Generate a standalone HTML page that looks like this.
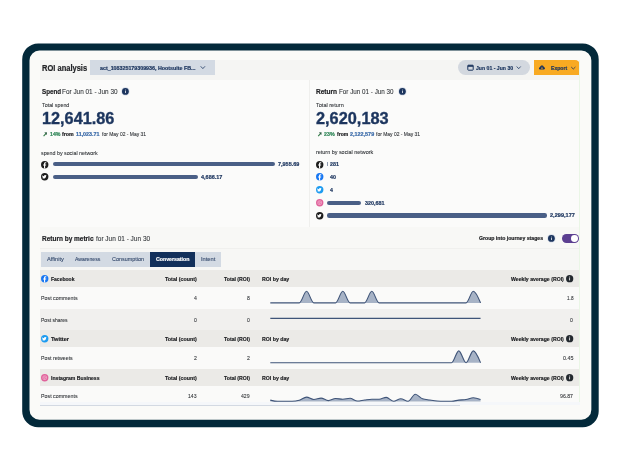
<!DOCTYPE html>
<html><head><meta charset="utf-8"><style>
html,body{margin:0;padding:0;}
body{width:620px;height:465px;overflow:hidden;background:#fff;position:relative;font-family:"Liberation Sans",sans-serif;}
#w{position:absolute;left:0;top:0;width:620px;height:465px;filter:blur(0.45px);}
.t{position:absolute;white-space:nowrap;line-height:1;transform-origin:0 0;}
.b{-webkit-text-stroke:0.2px currentColor;}
.r{-webkit-text-stroke:0.1px currentColor;}
</style></head><body><div id="w">
<svg style="overflow:visible;position:absolute;left:0;top:0" width="620" height="465" viewBox="0 0 620 465"><path d="M38.2,43.4 H582.7 A16,16 0 0 1 598.7,59.4 V411.3 A16,16 0 0 1 582.7,427.3 H38.2 A16,16 0 0 1 22.2,411.3 V59.4 A16,16 0 0 1 38.2,43.4 Z" fill="#03293a"/><path d="M39.5,50.6 H581.35 A10,10 0 0 1 591.35,60.6 V409.8 A10,10 0 0 1 581.35,419.8 H39.5 A10,10 0 0 1 29.5,409.8 V60.6 A10,10 0 0 1 39.5,50.6 Z" fill="#fafaf8"/></svg>
<div style="position:absolute;left:40px;top:60px;width:540.00px;height:19.80px;background:#f5f5f3;"></div>
<div class="t b" style="left:41.60px;top:64px;font-size:8.841px;font-weight:700;color:#222326;transform:scaleX(0.8514);">ROI analysis</div>
<div style="position:absolute;left:90px;top:60px;width:125.00px;height:15.00px;background:#d3dae3;"></div>
<div class="t b" style="left:100.30px;top:66px;font-size:5.217px;font-weight:700;color:#1c355e;transform:scaleX(1.0217);">act_108325179309936, Hootsuite FB...</div>
<svg style="overflow:visible;position:absolute;left:0;top:0" width="620" height="465"><path d="M200.7 66.3 L202.85 68.6 L205.0 66.3" fill="none" stroke="#1c355e" stroke-width="0.8"/></svg>
<div style="position:absolute;left:457.5px;top:60.3px;width:72.50px;height:14.90px;background:#d3d8df;border-radius:8px"></div>
<svg style="overflow:visible;position:absolute;left:466.6px;top:63.9px" width="7" height="7" viewBox="0 0 7 7"><rect x="0.8" y="1.2" width="5.4" height="5" rx="0.6" fill="none" stroke="#1c355e" stroke-width="1"/><rect x="0.8" y="1.2" width="5.4" height="1.6" fill="#1c355e"/></svg>
<div class="t b" style="left:476.00px;top:66px;font-size:5.507px;font-weight:700;color:#1c355e;transform:scaleX(0.9350);">Jun 01 - Jun 30</div>
<svg style="overflow:visible;position:absolute;left:0;top:0" width="620" height="465"><path d="M516.7 66.5 L518.7 68.7 L520.7 66.5" fill="none" stroke="#1c355e" stroke-width="0.8"/></svg>
<div style="position:absolute;left:533.5px;top:60px;width:46.50px;height:15.00px;background:#f8aa22;border-top-right-radius:5px"></div>
<svg style="overflow:visible;position:absolute;left:538.3px;top:63.6px" width="8" height="7" viewBox="0 0 8 7"><path d="M2 5.5 C0.5 5.5 0.5 3.2 2 3.2 C2.2 1.2 5.3 1 5.8 3 C7.4 3 7.4 5.5 6 5.5 Z" fill="#1c355e"/><path d="M4 2.8 V4.8 M3.2 4 L4 4.8 L4.8 4" stroke="#f6a623" stroke-width="0.6" fill="none"/></svg>
<div class="t b" style="left:550.50px;top:66px;font-size:5.362px;font-weight:700;color:#1c355e;transform:scaleX(0.9487);">Export</div>
<svg style="overflow:visible;position:absolute;left:0;top:0" width="620" height="465"><path d="M571.2 67.0 L573.3000000000001 69.0 L575.4000000000001 67.0" fill="none" stroke="#1c355e" stroke-width="0.8"/></svg>
<div style="position:absolute;left:40px;top:79.8px;width:540.00px;height:147.40px;background:#fbfbfa;"></div>
<div style="position:absolute;left:309px;top:79.8px;width:1.00px;height:147.40px;background:#efefed;"></div>
<div style="position:absolute;left:40px;top:226.7px;width:540.00px;height:0.70px;background:#efefed;"></div>
<div class="t b" style="left:41.50px;top:88px;font-size:7.246px;font-weight:700;color:#222326;transform:scaleX(0.8628);">Spend</div>
<div class="t r" style="left:62.20px;top:88px;font-size:7.246px;font-weight:400;color:#33363a;transform:scaleX(0.8850);">For Jun 01 - Jun 30</div>
<svg style="overflow:visible;position:absolute;left:121.90px;top:87.90px" width="6.8" height="6.8" viewBox="0 0 10 10"><circle cx="5" cy="5" r="6.3" fill="#dfe4ec"/><circle cx="5" cy="5" r="5" fill="#1c355e"/><circle cx="5" cy="2.8" r="0.7" fill="#fff"/><rect x="4.45" y="4.2" width="1.1" height="3.2" fill="#fff"/></svg>
<div class="t r" style="left:41.60px;top:103px;font-size:5.797px;font-weight:400;color:#33363a;transform:scaleX(0.9241);">Total spend</div>
<div class="t b" style="left:41.80px;top:111px;font-size:15.942px;font-weight:700;color:#1c355e;transform:scaleX(1.0206);-webkit-text-stroke:0.35px #1c355e">12,641.86</div>
<svg style="overflow:visible;position:absolute;left:0;top:0" width="620" height="465"><path d="M43.6 136.1 L45.9 133.7" stroke="#2f7a45" stroke-width="1.1"/><path d="M44.3 132.4 L46.9 132.3 L46.8 134.9 Z" fill="#24553a"/></svg>
<div class="t b" style="left:50.10px;top:132px;font-size:5.072px;font-weight:700;color:#33885a;transform:scaleX(1.0351);">14%</div>
<div class="t b" style="left:62.20px;top:132px;font-size:5.072px;font-weight:700;color:#222326;transform:scaleX(1.0302);">from</div>
<div class="t b" style="left:76.10px;top:132px;font-size:5.072px;font-weight:700;color:#3a6aa8;transform:scaleX(1.0542);">11,023.71</div>
<div class="t r" style="left:101.70px;top:132px;font-size:5.072px;font-weight:400;color:#33363a;transform:scaleX(0.9780);">for May 02 - May 31</div>
<div class="t r" style="left:41.30px;top:151px;font-size:5.652px;font-weight:400;color:#33363a;transform:scaleX(0.9410);">spend by social network</div>
<svg style="overflow:visible;position:absolute;left:41.20px;top:160.50px" width="7.4" height="7.4" viewBox="0 0 10 10"><circle cx="5" cy="5" r="5" fill="#1d1d1d"/><path d="M5.6 10 V6.2 H6.9 L7.1 4.7 H5.6 V3.8 C5.6 3.4 5.8 3.1 6.3 3.1 H7.1 V1.8 C6.8 1.75 6.4 1.7 6 1.7 C4.8 1.7 4.1 2.4 4.1 3.7 V4.7 H2.9 V6.2 H4.1 V10 Z" fill="#fff"/></svg>
<div style="position:absolute;left:52.6px;top:162.00px;width:222.60px;height:4.4px;border-radius:2.2px;background:#4a5f86"></div>
<div class="t b" style="left:278.00px;top:162px;font-size:5.362px;font-weight:700;color:#1c355e;transform:scaleX(1.0199);">7,955.69</div>
<svg style="overflow:visible;position:absolute;left:41.20px;top:173.30px" width="7.4" height="7.4" viewBox="0 0 10 10"><circle cx="5" cy="5" r="5" fill="#1d1d1d"/><path d="M7.6 3.3 C7.3 3.45 7 3.5 6.7 3.55 C7 3.35 7.25 3.05 7.35 2.7 C7.05 2.9 6.7 3 6.4 3.1 C5.8 2.5 4.8 2.6 4.4 3.3 C4.2 3.6 4.15 3.95 4.25 4.3 C3.2 4.25 2.3 3.8 1.7 3 C1.4 3.5 1.55 4.2 2.05 4.55 C1.85 4.55 1.7 4.5 1.55 4.4 C1.55 4.95 1.95 5.4 2.45 5.55 C2.3 5.6 2.1 5.6 1.95 5.6 C2.1 6.05 2.55 6.35 3.05 6.4 C2.6 6.75 2 6.95 1.4 6.9 C3.8 8.4 6.9 6.9 6.95 4 C7.2 3.8 7.45 3.6 7.6 3.3 Z" fill="#fff"/></svg>
<div style="position:absolute;left:52.6px;top:174.80px;width:145.10px;height:4.4px;border-radius:2.2px;background:#4a5f86"></div>
<div class="t b" style="left:200.60px;top:175px;font-size:5.362px;font-weight:700;color:#1c355e;transform:scaleX(1.0247);">4,686.17</div>
<div class="t b" style="left:315.90px;top:88px;font-size:7.246px;font-weight:700;color:#222326;transform:scaleX(0.9043);">Return</div>
<div class="t r" style="left:339.10px;top:88px;font-size:7.246px;font-weight:400;color:#33363a;transform:scaleX(0.8691);">For Jun 01 - Jun 30</div>
<svg style="overflow:visible;position:absolute;left:399.00px;top:87.90px" width="6.8" height="6.8" viewBox="0 0 10 10"><circle cx="5" cy="5" r="6.3" fill="#dfe4ec"/><circle cx="5" cy="5" r="5" fill="#1c355e"/><circle cx="5" cy="2.8" r="0.7" fill="#fff"/><rect x="4.45" y="4.2" width="1.1" height="3.2" fill="#fff"/></svg>
<div class="t r" style="left:316.00px;top:103px;font-size:5.797px;font-weight:400;color:#33363a;transform:scaleX(0.9582);">Total return</div>
<div class="t b" style="left:316.20px;top:111px;font-size:15.942px;font-weight:700;color:#1c355e;transform:scaleX(1.0248);-webkit-text-stroke:0.35px #1c355e">2,620,183</div>
<svg style="overflow:visible;position:absolute;left:0;top:0" width="620" height="465"><path d="M318.2 136.1 L320.5 133.7" stroke="#2f7a45" stroke-width="1.1"/><path d="M318.9 132.4 L321.5 132.3 L321.4 134.9 Z" fill="#24553a"/></svg>
<div class="t b" style="left:324.10px;top:132px;font-size:5.072px;font-weight:700;color:#33885a;transform:scaleX(1.0450);">23%</div>
<div class="t b" style="left:336.70px;top:132px;font-size:5.072px;font-weight:700;color:#222326;transform:scaleX(0.9947);">from</div>
<div class="t b" style="left:350.20px;top:132px;font-size:5.072px;font-weight:700;color:#3a6aa8;transform:scaleX(1.0722);">2,122,579</div>
<div class="t r" style="left:376.40px;top:132px;font-size:5.072px;font-weight:400;color:#33363a;transform:scaleX(0.9780);">for May 02 - May 31</div>
<div class="t r" style="left:315.60px;top:150px;font-size:5.652px;font-weight:400;color:#33363a;transform:scaleX(0.9613);">return by social network</div>
<svg style="overflow:visible;position:absolute;left:315.50px;top:160.60px" width="7.4" height="7.4" viewBox="0 0 10 10"><circle cx="5" cy="5" r="5" fill="#1d1d1d"/><path d="M5.6 10 V6.2 H6.9 L7.1 4.7 H5.6 V3.8 C5.6 3.4 5.8 3.1 6.3 3.1 H7.1 V1.8 C6.8 1.75 6.4 1.7 6 1.7 C4.8 1.7 4.1 2.4 4.1 3.7 V4.7 H2.9 V6.2 H4.1 V10 Z" fill="#fff"/></svg>
<div style="position:absolute;left:326.9px;top:162.3px;width:0.80px;height:4.20px;background:#8e9bb0;"></div>
<div class="t b" style="left:330.00px;top:162px;font-size:5.362px;font-weight:700;color:#1c355e;transform:scaleX(0.9939);">281</div>
<svg style="overflow:visible;position:absolute;left:315.50px;top:173.40px" width="7.4" height="7.4" viewBox="0 0 10 10"><circle cx="5" cy="5" r="5" fill="#1877f2"/><path d="M5.6 10 V6.2 H6.9 L7.1 4.7 H5.6 V3.8 C5.6 3.4 5.8 3.1 6.3 3.1 H7.1 V1.8 C6.8 1.75 6.4 1.7 6 1.7 C4.8 1.7 4.1 2.4 4.1 3.7 V4.7 H2.9 V6.2 H4.1 V10 Z" fill="#fff"/></svg>
<div class="t b" style="left:330.00px;top:175px;font-size:5.362px;font-weight:700;color:#1c355e;transform:scaleX(0.9913);">40</div>
<svg style="overflow:visible;position:absolute;left:315.50px;top:186.20px" width="7.4" height="7.4" viewBox="0 0 10 10"><circle cx="5" cy="5" r="5" fill="#1d9bf0"/><path d="M7.6 3.3 C7.3 3.45 7 3.5 6.7 3.55 C7 3.35 7.25 3.05 7.35 2.7 C7.05 2.9 6.7 3 6.4 3.1 C5.8 2.5 4.8 2.6 4.4 3.3 C4.2 3.6 4.15 3.95 4.25 4.3 C3.2 4.25 2.3 3.8 1.7 3 C1.4 3.5 1.55 4.2 2.05 4.55 C1.85 4.55 1.7 4.5 1.55 4.4 C1.55 4.95 1.95 5.4 2.45 5.55 C2.3 5.6 2.1 5.6 1.95 5.6 C2.1 6.05 2.55 6.35 3.05 6.4 C2.6 6.75 2 6.95 1.4 6.9 C3.8 8.4 6.9 6.9 6.95 4 C7.2 3.8 7.45 3.6 7.6 3.3 Z" fill="#fff"/></svg>
<div class="t b" style="left:330.00px;top:188px;font-size:5.362px;font-weight:700;color:#1c355e;transform:scaleX(0.9745);">4</div>
<svg style="overflow:visible;position:absolute;left:315.50px;top:199.20px" width="7.4" height="7.4" viewBox="0 0 10 10"><circle cx="5" cy="5" r="5" fill="#e0629b"/><rect x="2.6" y="2.6" width="4.8" height="4.8" rx="1.4" fill="none" stroke="#f7c6dc" stroke-width="0.8"/><circle cx="5" cy="5" r="1.1" fill="none" stroke="#f7c6dc" stroke-width="0.7"/></svg>
<div style="position:absolute;left:327.3px;top:200.70px;width:34.20px;height:4.4px;border-radius:2.2px;background:#4a5f86"></div>
<div class="t b" style="left:364.50px;top:201px;font-size:5.362px;font-weight:700;color:#1c355e;transform:scaleX(1.0060);">320,681</div>
<svg style="overflow:visible;position:absolute;left:315.50px;top:211.80px" width="7.4" height="7.4" viewBox="0 0 10 10"><circle cx="5" cy="5" r="5" fill="#1d1d1d"/><path d="M7.6 3.3 C7.3 3.45 7 3.5 6.7 3.55 C7 3.35 7.25 3.05 7.35 2.7 C7.05 2.9 6.7 3 6.4 3.1 C5.8 2.5 4.8 2.6 4.4 3.3 C4.2 3.6 4.15 3.95 4.25 4.3 C3.2 4.25 2.3 3.8 1.7 3 C1.4 3.5 1.55 4.2 2.05 4.55 C1.85 4.55 1.7 4.5 1.55 4.4 C1.55 4.95 1.95 5.4 2.45 5.55 C2.3 5.6 2.1 5.6 1.95 5.6 C2.1 6.05 2.55 6.35 3.05 6.4 C2.6 6.75 2 6.95 1.4 6.9 C3.8 8.4 6.9 6.9 6.95 4 C7.2 3.8 7.45 3.6 7.6 3.3 Z" fill="#fff"/></svg>
<div style="position:absolute;left:327.3px;top:213.30px;width:219.80px;height:4.4px;border-radius:2.2px;background:#4a5f86"></div>
<div class="t b" style="left:549.90px;top:213px;font-size:5.362px;font-weight:700;color:#1c355e;transform:scaleX(1.0435);">2,299,177</div>
<div style="position:absolute;left:40px;top:227.4px;width:540.00px;height:20.80px;background:#f8f8f6;"></div>
<div style="position:absolute;left:40px;top:248.2px;width:540.00px;height:0.70px;background:#f0f0ee;"></div>
<div class="t b" style="left:41.90px;top:235px;font-size:7.246px;font-weight:700;color:#222326;transform:scaleX(0.8963);">Return by metric</div>
<div class="t r" style="left:95.50px;top:235px;font-size:7.246px;font-weight:400;color:#33363a;transform:scaleX(0.8969);">for Jun 01 - Jun 30</div>
<div class="t b" style="left:479.10px;top:236px;font-size:5.507px;font-weight:700;color:#222326;transform:scaleX(0.9353);">Group into journey stages</div>
<svg style="overflow:visible;position:absolute;left:547.90px;top:235.20px" width="6.8" height="6.8" viewBox="0 0 10 10"><circle cx="5" cy="5" r="6.3" fill="#dfe4ec"/><circle cx="5" cy="5" r="5" fill="#1c355e"/><circle cx="5" cy="2.8" r="0.7" fill="#fff"/><rect x="4.45" y="4.2" width="1.1" height="3.2" fill="#fff"/></svg>
<div style="position:absolute;left:561.5px;top:234.1px;width:17.5px;height:8.8px;border-radius:4.4px;background:#5c3f91"></div>
<div style="position:absolute;left:571px;top:235.1px;width:6.8px;height:6.8px;border-radius:50%;background:#fff"></div>
<div style="position:absolute;left:40px;top:248.9px;width:540.00px;height:156.10px;background:#f7f7f5;"></div>
<div style="position:absolute;left:41px;top:251.9px;width:179.50px;height:14.80px;background:#d3dae3;"></div>
<div style="position:absolute;left:149.9px;top:251.9px;width:44.90px;height:14.80px;background:#12305b;"></div>
<div class="t r" style="left:47.00px;top:257px;font-size:5.507px;font-weight:400;color:#33486b;transform:scaleX(1.0281);">Affinity</div>
<div class="t r" style="left:75.20px;top:257px;font-size:5.507px;font-weight:400;color:#33486b;transform:scaleX(0.9319);">Awareness</div>
<div class="t r" style="left:112.00px;top:257px;font-size:5.507px;font-weight:400;color:#33486b;transform:scaleX(0.9866);">Consumption</div>
<div class="t b" style="left:155.60px;top:257px;font-size:5.507px;font-weight:700;color:#ffffff;transform:scaleX(0.9520);">Conversation</div>
<div class="t r" style="left:200.60px;top:257px;font-size:5.507px;font-weight:400;color:#33486b;transform:scaleX(1.0387);">Intent</div>
<div style="position:absolute;left:40px;top:270px;width:540.00px;height:17.00px;background:#ebeae7;"></div>
<svg style="overflow:visible;position:absolute;left:41.20px;top:274.80px" width="7.4" height="7.4" viewBox="0 0 10 10"><circle cx="5" cy="5" r="5" fill="#1877f2"/><path d="M5.6 10 V6.2 H6.9 L7.1 4.7 H5.6 V3.8 C5.6 3.4 5.8 3.1 6.3 3.1 H7.1 V1.8 C6.8 1.75 6.4 1.7 6 1.7 C4.8 1.7 4.1 2.4 4.1 3.7 V4.7 H2.9 V6.2 H4.1 V10 Z" fill="#fff"/></svg>
<div class="t b" style="left:51.20px;top:276px;font-size:6.087px;font-weight:700;color:#222326;transform:scaleX(0.8267);">Facebook</div>
<div class="t b" style="left:165.10px;top:276px;font-size:6.087px;font-weight:700;color:#222326;transform:scaleX(0.8764);">Total (count)</div>
<div class="t b" style="left:224.00px;top:276px;font-size:6.087px;font-weight:700;color:#222326;transform:scaleX(0.8483);">Total (ROI)</div>
<div class="t b" style="left:261.70px;top:276px;font-size:6.087px;font-weight:700;color:#222326;transform:scaleX(0.8584);">ROI by day</div>
<div class="t b" style="left:511.30px;top:276px;font-size:6.087px;font-weight:700;color:#222326;transform:scaleX(0.8512);">Weekly average (ROI)</div>
<svg style="overflow:visible;position:absolute;left:566.05px;top:274.85px" width="7.3" height="7.3" viewBox="0 0 10 10"><circle cx="5" cy="5" r="5" fill="#22282e"/><circle cx="5" cy="2.8" r="0.7" fill="#fff"/><rect x="4.45" y="4.2" width="1.1" height="3.2" fill="#fff"/></svg>
<div style="position:absolute;left:40px;top:287px;width:540.00px;height:21.50px;background:#fafaf9;"></div>
<div class="t r" style="left:41.30px;top:295px;font-size:6.087px;font-weight:400;color:#33363a;transform:scaleX(0.8727);">Post comments</div>
<div class="t r" style="left:194.13px;top:295px;font-size:6.087px;font-weight:400;color:#33363a;transform:scaleX(0.8500);">4</div>
<div class="t r" style="left:247.13px;top:295px;font-size:6.087px;font-weight:400;color:#33363a;transform:scaleX(0.8500);">8</div>
<div class="t r" style="left:566.50px;top:295px;font-size:6.087px;font-weight:400;color:#33363a;transform:scaleX(0.7682);">1.8</div>
<div style="position:absolute;left:40px;top:308.5px;width:540.00px;height:21.50px;background:#f1f0ee;"></div>
<div class="t r" style="left:41.30px;top:317px;font-size:6.087px;font-weight:400;color:#33363a;transform:scaleX(0.8245);">Post shares</div>
<div class="t r" style="left:194.13px;top:317px;font-size:6.087px;font-weight:400;color:#33363a;transform:scaleX(0.8500);">0</div>
<div class="t r" style="left:247.13px;top:317px;font-size:6.087px;font-weight:400;color:#33363a;transform:scaleX(0.8500);">0</div>
<div class="t r" style="left:570.10px;top:317px;font-size:6.087px;font-weight:400;color:#33363a;transform:scaleX(0.8584);">0</div>
<div style="position:absolute;left:40px;top:330px;width:540.00px;height:17.00px;background:#ebeae7;"></div>
<svg style="overflow:visible;position:absolute;left:41.20px;top:334.80px" width="7.4" height="7.4" viewBox="0 0 10 10"><circle cx="5" cy="5" r="5" fill="#1d9bf0"/><path d="M7.6 3.3 C7.3 3.45 7 3.5 6.7 3.55 C7 3.35 7.25 3.05 7.35 2.7 C7.05 2.9 6.7 3 6.4 3.1 C5.8 2.5 4.8 2.6 4.4 3.3 C4.2 3.6 4.15 3.95 4.25 4.3 C3.2 4.25 2.3 3.8 1.7 3 C1.4 3.5 1.55 4.2 2.05 4.55 C1.85 4.55 1.7 4.5 1.55 4.4 C1.55 4.95 1.95 5.4 2.45 5.55 C2.3 5.6 2.1 5.6 1.95 5.6 C2.1 6.05 2.55 6.35 3.05 6.4 C2.6 6.75 2 6.95 1.4 6.9 C3.8 8.4 6.9 6.9 6.95 4 C7.2 3.8 7.45 3.6 7.6 3.3 Z" fill="#fff"/></svg>
<div class="t b" style="left:51.20px;top:336px;font-size:6.087px;font-weight:700;color:#222326;transform:scaleX(0.9278);">Twitter</div>
<div class="t b" style="left:165.10px;top:336px;font-size:6.087px;font-weight:700;color:#222326;transform:scaleX(0.8764);">Total (count)</div>
<div class="t b" style="left:224.00px;top:336px;font-size:6.087px;font-weight:700;color:#222326;transform:scaleX(0.8483);">Total (ROI)</div>
<div class="t b" style="left:261.70px;top:336px;font-size:6.087px;font-weight:700;color:#222326;transform:scaleX(0.8584);">ROI by day</div>
<div class="t b" style="left:511.30px;top:336px;font-size:6.087px;font-weight:700;color:#222326;transform:scaleX(0.8512);">Weekly average (ROI)</div>
<svg style="overflow:visible;position:absolute;left:566.05px;top:334.85px" width="7.3" height="7.3" viewBox="0 0 10 10"><circle cx="5" cy="5" r="5" fill="#22282e"/><circle cx="5" cy="2.8" r="0.7" fill="#fff"/><rect x="4.45" y="4.2" width="1.1" height="3.2" fill="#fff"/></svg>
<div style="position:absolute;left:40px;top:347px;width:540.00px;height:22.00px;background:#fafaf9;"></div>
<div class="t r" style="left:41.30px;top:355px;font-size:6.087px;font-weight:400;color:#33363a;transform:scaleX(0.8621);">Post retweets</div>
<div class="t r" style="left:194.13px;top:355px;font-size:6.087px;font-weight:400;color:#33363a;transform:scaleX(0.8500);">2</div>
<div class="t r" style="left:247.13px;top:355px;font-size:6.087px;font-weight:400;color:#33363a;transform:scaleX(0.8500);">2</div>
<div class="t r" style="left:562.50px;top:355px;font-size:6.087px;font-weight:400;color:#33363a;transform:scaleX(0.8869);">0.45</div>
<div style="position:absolute;left:40px;top:369px;width:540.00px;height:16.80px;background:#ebeae7;"></div>
<svg style="overflow:visible;position:absolute;left:41.20px;top:373.70px" width="7.4" height="7.4" viewBox="0 0 10 10"><circle cx="5" cy="5" r="5" fill="#e0629b"/><rect x="2.6" y="2.6" width="4.8" height="4.8" rx="1.4" fill="none" stroke="#f7c6dc" stroke-width="0.8"/><circle cx="5" cy="5" r="1.1" fill="none" stroke="#f7c6dc" stroke-width="0.7"/></svg>
<div class="t b" style="left:51.20px;top:375px;font-size:6.087px;font-weight:700;color:#222326;transform:scaleX(0.8400);">Instagram Business</div>
<div class="t b" style="left:165.10px;top:375px;font-size:6.087px;font-weight:700;color:#222326;transform:scaleX(0.8764);">Total (count)</div>
<div class="t b" style="left:224.00px;top:375px;font-size:6.087px;font-weight:700;color:#222326;transform:scaleX(0.8483);">Total (ROI)</div>
<div class="t b" style="left:261.70px;top:375px;font-size:6.087px;font-weight:700;color:#222326;transform:scaleX(0.8584);">ROI by day</div>
<div class="t b" style="left:511.30px;top:375px;font-size:6.087px;font-weight:700;color:#222326;transform:scaleX(0.8512);">Weekly average (ROI)</div>
<svg style="overflow:visible;position:absolute;left:566.05px;top:373.75px" width="7.3" height="7.3" viewBox="0 0 10 10"><circle cx="5" cy="5" r="5" fill="#22282e"/><circle cx="5" cy="2.8" r="0.7" fill="#fff"/><rect x="4.45" y="4.2" width="1.1" height="3.2" fill="#fff"/></svg>
<div style="position:absolute;left:40px;top:385.8px;width:540.00px;height:19.20px;background:#fafaf9;"></div>
<div class="t r" style="left:41.30px;top:393px;font-size:6.087px;font-weight:400;color:#33363a;transform:scaleX(0.8727);">Post comments</div>
<div class="t r" style="left:188.36px;top:393px;font-size:6.087px;font-weight:400;color:#33363a;transform:scaleX(0.8500);">143</div>
<div class="t r" style="left:241.36px;top:393px;font-size:6.087px;font-weight:400;color:#33363a;transform:scaleX(0.8500);">429</div>
<div class="t r" style="left:560.00px;top:393px;font-size:6.087px;font-weight:400;color:#33363a;transform:scaleX(0.8526);">96.87</div>
<div style="position:absolute;left:40px;top:404.8px;width:420.00px;height:1.00px;background:#d3d9e2;"></div>
<svg style="overflow:visible;position:absolute;left:0;top:0" width="620" height="465" viewBox="0 0 620 465"><path d="M270.30,302.90 C272.72,302.90 275.13,302.90 277.55,302.90 C279.97,302.90 282.38,302.90 284.80,302.90 C287.22,302.90 289.63,302.90 292.05,302.90 C294.47,302.90 296.88,302.90 299.30,302.90 C301.72,302.90 304.13,291.30 306.55,291.30 C308.97,291.30 311.38,302.90 313.80,302.90 C316.22,302.90 318.63,302.90 321.05,302.90 C323.47,302.90 325.88,302.90 328.30,302.90 C330.72,302.90 333.13,302.90 335.55,302.90 C337.97,302.90 340.38,291.30 342.80,291.30 C345.22,291.30 347.63,302.90 350.05,302.90 C352.47,302.90 354.88,302.90 357.30,302.90 C359.72,302.90 362.13,302.90 364.55,302.90 C366.97,302.90 369.38,291.30 371.80,291.30 C374.22,291.30 376.63,302.90 379.05,302.90 C381.47,302.90 383.88,302.90 386.30,302.90 C388.72,302.90 391.13,302.90 393.55,302.90 C395.97,302.90 398.38,302.90 400.80,302.90 C403.22,302.90 405.63,302.90 408.05,302.90 C410.47,302.90 412.88,302.90 415.30,302.90 C417.72,302.90 420.13,302.90 422.55,302.90 C424.97,302.90 427.38,302.90 429.80,302.90 C432.22,302.90 434.63,302.90 437.05,302.90 C439.47,302.90 441.88,302.90 444.30,302.90 C446.72,302.90 449.13,302.90 451.55,302.90 C453.97,302.90 456.38,302.90 458.80,302.90 C461.22,302.90 463.63,302.90 466.05,302.90 C468.47,302.90 470.88,291.30 473.30,291.30 C475.72,291.30 478.13,297.10 480.55,302.90 L480.55,302.90 L270.30,302.90 Z" fill="#a7b3c6"/><path d="M270.30,302.90 C272.72,302.90 275.13,302.90 277.55,302.90 C279.97,302.90 282.38,302.90 284.80,302.90 C287.22,302.90 289.63,302.90 292.05,302.90 C294.47,302.90 296.88,302.90 299.30,302.90 C301.72,302.90 304.13,291.30 306.55,291.30 C308.97,291.30 311.38,302.90 313.80,302.90 C316.22,302.90 318.63,302.90 321.05,302.90 C323.47,302.90 325.88,302.90 328.30,302.90 C330.72,302.90 333.13,302.90 335.55,302.90 C337.97,302.90 340.38,291.30 342.80,291.30 C345.22,291.30 347.63,302.90 350.05,302.90 C352.47,302.90 354.88,302.90 357.30,302.90 C359.72,302.90 362.13,302.90 364.55,302.90 C366.97,302.90 369.38,291.30 371.80,291.30 C374.22,291.30 376.63,302.90 379.05,302.90 C381.47,302.90 383.88,302.90 386.30,302.90 C388.72,302.90 391.13,302.90 393.55,302.90 C395.97,302.90 398.38,302.90 400.80,302.90 C403.22,302.90 405.63,302.90 408.05,302.90 C410.47,302.90 412.88,302.90 415.30,302.90 C417.72,302.90 420.13,302.90 422.55,302.90 C424.97,302.90 427.38,302.90 429.80,302.90 C432.22,302.90 434.63,302.90 437.05,302.90 C439.47,302.90 441.88,302.90 444.30,302.90 C446.72,302.90 449.13,302.90 451.55,302.90 C453.97,302.90 456.38,302.90 458.80,302.90 C461.22,302.90 463.63,302.90 466.05,302.90 C468.47,302.90 470.88,291.30 473.30,291.30 C475.72,291.30 478.13,297.10 480.55,302.90" fill="none" stroke="#3f5478" stroke-width="1.1" stroke-linejoin="round"/></svg>
<svg style="overflow:visible;position:absolute;left:0;top:0" width="620" height="465" viewBox="0 0 620 465"><path d="M270.30,318.40 C272.72,318.40 275.13,318.40 277.55,318.40 C279.97,318.40 282.38,318.40 284.80,318.40 C287.22,318.40 289.63,318.40 292.05,318.40 C294.47,318.40 296.88,318.40 299.30,318.40 C301.72,318.40 304.13,318.40 306.55,318.40 C308.97,318.40 311.38,318.40 313.80,318.40 C316.22,318.40 318.63,318.40 321.05,318.40 C323.47,318.40 325.88,318.40 328.30,318.40 C330.72,318.40 333.13,318.40 335.55,318.40 C337.97,318.40 340.38,318.40 342.80,318.40 C345.22,318.40 347.63,318.40 350.05,318.40 C352.47,318.40 354.88,318.40 357.30,318.40 C359.72,318.40 362.13,318.40 364.55,318.40 C366.97,318.40 369.38,318.40 371.80,318.40 C374.22,318.40 376.63,318.40 379.05,318.40 C381.47,318.40 383.88,318.40 386.30,318.40 C388.72,318.40 391.13,318.40 393.55,318.40 C395.97,318.40 398.38,318.40 400.80,318.40 C403.22,318.40 405.63,318.40 408.05,318.40 C410.47,318.40 412.88,318.40 415.30,318.40 C417.72,318.40 420.13,318.40 422.55,318.40 C424.97,318.40 427.38,318.40 429.80,318.40 C432.22,318.40 434.63,318.40 437.05,318.40 C439.47,318.40 441.88,318.40 444.30,318.40 C446.72,318.40 449.13,318.40 451.55,318.40 C453.97,318.40 456.38,318.40 458.80,318.40 C461.22,318.40 463.63,318.40 466.05,318.40 C468.47,318.40 470.88,318.40 473.30,318.40 C475.72,318.40 478.13,318.40 480.55,318.40 L480.55,318.40 L270.30,318.40 Z" fill="#a7b3c6"/><path d="M270.30,318.40 C272.72,318.40 275.13,318.40 277.55,318.40 C279.97,318.40 282.38,318.40 284.80,318.40 C287.22,318.40 289.63,318.40 292.05,318.40 C294.47,318.40 296.88,318.40 299.30,318.40 C301.72,318.40 304.13,318.40 306.55,318.40 C308.97,318.40 311.38,318.40 313.80,318.40 C316.22,318.40 318.63,318.40 321.05,318.40 C323.47,318.40 325.88,318.40 328.30,318.40 C330.72,318.40 333.13,318.40 335.55,318.40 C337.97,318.40 340.38,318.40 342.80,318.40 C345.22,318.40 347.63,318.40 350.05,318.40 C352.47,318.40 354.88,318.40 357.30,318.40 C359.72,318.40 362.13,318.40 364.55,318.40 C366.97,318.40 369.38,318.40 371.80,318.40 C374.22,318.40 376.63,318.40 379.05,318.40 C381.47,318.40 383.88,318.40 386.30,318.40 C388.72,318.40 391.13,318.40 393.55,318.40 C395.97,318.40 398.38,318.40 400.80,318.40 C403.22,318.40 405.63,318.40 408.05,318.40 C410.47,318.40 412.88,318.40 415.30,318.40 C417.72,318.40 420.13,318.40 422.55,318.40 C424.97,318.40 427.38,318.40 429.80,318.40 C432.22,318.40 434.63,318.40 437.05,318.40 C439.47,318.40 441.88,318.40 444.30,318.40 C446.72,318.40 449.13,318.40 451.55,318.40 C453.97,318.40 456.38,318.40 458.80,318.40 C461.22,318.40 463.63,318.40 466.05,318.40 C468.47,318.40 470.88,318.40 473.30,318.40 C475.72,318.40 478.13,318.40 480.55,318.40" fill="none" stroke="#3f5478" stroke-width="1.1" stroke-linejoin="round"/></svg>
<svg style="overflow:visible;position:absolute;left:0;top:0" width="620" height="465" viewBox="0 0 620 465"><path d="M270.30,362.70 C272.72,362.70 275.13,362.70 277.55,362.70 C279.97,362.70 282.38,362.70 284.80,362.70 C287.22,362.70 289.63,362.70 292.05,362.70 C294.47,362.70 296.88,362.70 299.30,362.70 C301.72,362.70 304.13,362.70 306.55,362.70 C308.97,362.70 311.38,362.70 313.80,362.70 C316.22,362.70 318.63,362.70 321.05,362.70 C323.47,362.70 325.88,362.70 328.30,362.70 C330.72,362.70 333.13,362.70 335.55,362.70 C337.97,362.70 340.38,362.70 342.80,362.70 C345.22,362.70 347.63,362.70 350.05,362.70 C352.47,362.70 354.88,362.70 357.30,362.70 C359.72,362.70 362.13,362.70 364.55,362.70 C366.97,362.70 369.38,362.70 371.80,362.70 C374.22,362.70 376.63,362.70 379.05,362.70 C381.47,362.70 383.88,362.70 386.30,362.70 C388.72,362.70 391.13,362.70 393.55,362.70 C395.97,362.70 398.38,362.70 400.80,362.70 C403.22,362.70 405.63,362.70 408.05,362.70 C410.47,362.70 412.88,362.70 415.30,362.70 C417.72,362.70 420.13,362.70 422.55,362.70 C424.97,362.70 427.38,362.70 429.80,362.70 C432.22,362.70 434.63,362.70 437.05,362.70 C439.47,362.70 441.88,362.70 444.30,362.70 C446.72,362.70 449.13,362.70 451.55,362.70 C453.97,362.70 456.38,350.90 458.80,350.90 C461.22,350.90 463.63,362.70 466.05,362.70 C468.47,362.70 470.88,350.90 473.30,350.90 C475.72,350.90 478.13,356.80 480.55,362.70 L480.55,362.70 L270.30,362.70 Z" fill="#a7b3c6"/><path d="M270.30,362.70 C272.72,362.70 275.13,362.70 277.55,362.70 C279.97,362.70 282.38,362.70 284.80,362.70 C287.22,362.70 289.63,362.70 292.05,362.70 C294.47,362.70 296.88,362.70 299.30,362.70 C301.72,362.70 304.13,362.70 306.55,362.70 C308.97,362.70 311.38,362.70 313.80,362.70 C316.22,362.70 318.63,362.70 321.05,362.70 C323.47,362.70 325.88,362.70 328.30,362.70 C330.72,362.70 333.13,362.70 335.55,362.70 C337.97,362.70 340.38,362.70 342.80,362.70 C345.22,362.70 347.63,362.70 350.05,362.70 C352.47,362.70 354.88,362.70 357.30,362.70 C359.72,362.70 362.13,362.70 364.55,362.70 C366.97,362.70 369.38,362.70 371.80,362.70 C374.22,362.70 376.63,362.70 379.05,362.70 C381.47,362.70 383.88,362.70 386.30,362.70 C388.72,362.70 391.13,362.70 393.55,362.70 C395.97,362.70 398.38,362.70 400.80,362.70 C403.22,362.70 405.63,362.70 408.05,362.70 C410.47,362.70 412.88,362.70 415.30,362.70 C417.72,362.70 420.13,362.70 422.55,362.70 C424.97,362.70 427.38,362.70 429.80,362.70 C432.22,362.70 434.63,362.70 437.05,362.70 C439.47,362.70 441.88,362.70 444.30,362.70 C446.72,362.70 449.13,362.70 451.55,362.70 C453.97,362.70 456.38,350.90 458.80,350.90 C461.22,350.90 463.63,362.70 466.05,362.70 C468.47,362.70 470.88,350.90 473.30,350.90 C475.72,350.90 478.13,356.80 480.55,362.70" fill="none" stroke="#3f5478" stroke-width="1.1" stroke-linejoin="round"/></svg>
<svg style="overflow:visible;position:absolute;left:0;top:0" width="620" height="465" viewBox="0 0 620 465"><path d="M270.30,400.10 C272.72,400.70 275.13,401.30 277.55,401.30 C279.97,401.30 282.38,401.30 284.80,401.30 C287.22,401.30 289.63,401.30 292.05,401.30 C294.47,401.30 296.88,400.90 299.30,400.20 C301.72,399.50 304.13,397.10 306.55,397.10 C308.97,397.10 311.38,399.50 313.80,399.50 C316.22,399.50 318.63,398.10 321.05,398.10 C323.47,398.10 325.88,400.60 328.30,400.60 C330.72,400.60 333.13,398.50 335.55,398.50 C337.97,398.50 340.38,399.20 342.80,399.20 C345.22,399.20 347.63,398.30 350.05,398.30 C352.47,398.30 354.88,401.00 357.30,401.00 C359.72,401.00 362.13,400.30 364.55,400.00 C366.97,399.70 369.38,399.20 371.80,399.20 C374.22,399.20 376.63,399.20 379.05,399.20 C381.47,399.20 383.88,397.40 386.30,397.40 C388.72,397.40 391.13,401.30 393.55,401.30 C395.97,401.30 398.38,398.80 400.80,398.80 C403.22,398.80 405.63,401.30 408.05,401.30 C410.47,401.30 412.88,394.20 415.30,394.20 C417.72,394.20 420.13,398.00 422.55,398.80 C424.97,399.60 427.38,399.63 429.80,400.00 C432.22,400.37 434.63,400.80 437.05,401.00 C439.47,401.20 441.88,401.30 444.30,401.30 C446.72,401.30 449.13,401.30 451.55,401.30 C453.97,401.30 456.38,400.40 458.80,400.10 C461.22,399.80 463.63,399.88 466.05,399.50 C468.47,399.12 470.88,397.80 473.30,397.80 C475.72,397.80 478.13,398.65 480.55,399.50 L480.55,401.50 L270.30,401.50 Z" fill="#a7b3c6"/><path d="M270.30,400.10 C272.72,400.70 275.13,401.30 277.55,401.30 C279.97,401.30 282.38,401.30 284.80,401.30 C287.22,401.30 289.63,401.30 292.05,401.30 C294.47,401.30 296.88,400.90 299.30,400.20 C301.72,399.50 304.13,397.10 306.55,397.10 C308.97,397.10 311.38,399.50 313.80,399.50 C316.22,399.50 318.63,398.10 321.05,398.10 C323.47,398.10 325.88,400.60 328.30,400.60 C330.72,400.60 333.13,398.50 335.55,398.50 C337.97,398.50 340.38,399.20 342.80,399.20 C345.22,399.20 347.63,398.30 350.05,398.30 C352.47,398.30 354.88,401.00 357.30,401.00 C359.72,401.00 362.13,400.30 364.55,400.00 C366.97,399.70 369.38,399.20 371.80,399.20 C374.22,399.20 376.63,399.20 379.05,399.20 C381.47,399.20 383.88,397.40 386.30,397.40 C388.72,397.40 391.13,401.30 393.55,401.30 C395.97,401.30 398.38,398.80 400.80,398.80 C403.22,398.80 405.63,401.30 408.05,401.30 C410.47,401.30 412.88,394.20 415.30,394.20 C417.72,394.20 420.13,398.00 422.55,398.80 C424.97,399.60 427.38,399.63 429.80,400.00 C432.22,400.37 434.63,400.80 437.05,401.00 C439.47,401.20 441.88,401.30 444.30,401.30 C446.72,401.30 449.13,401.30 451.55,401.30 C453.97,401.30 456.38,400.40 458.80,400.10 C461.22,399.80 463.63,399.88 466.05,399.50 C468.47,399.12 470.88,397.80 473.30,397.80 C475.72,397.80 478.13,398.65 480.55,399.50" fill="none" stroke="#3f5478" stroke-width="1.1" stroke-linejoin="round"/></svg>
<div style="position:absolute;left:40px;top:402px;width:540.00px;height:3.00px;background:#f5f7fa;"></div>
<div style="position:absolute;left:40px;top:404.8px;width:420.00px;height:1.00px;background:#d3d9e2;"></div>
<div style="position:absolute;left:579.2px;top:60px;width:0.70px;height:342.00px;background:#eaf6e6;"></div>
</div></body></html>
